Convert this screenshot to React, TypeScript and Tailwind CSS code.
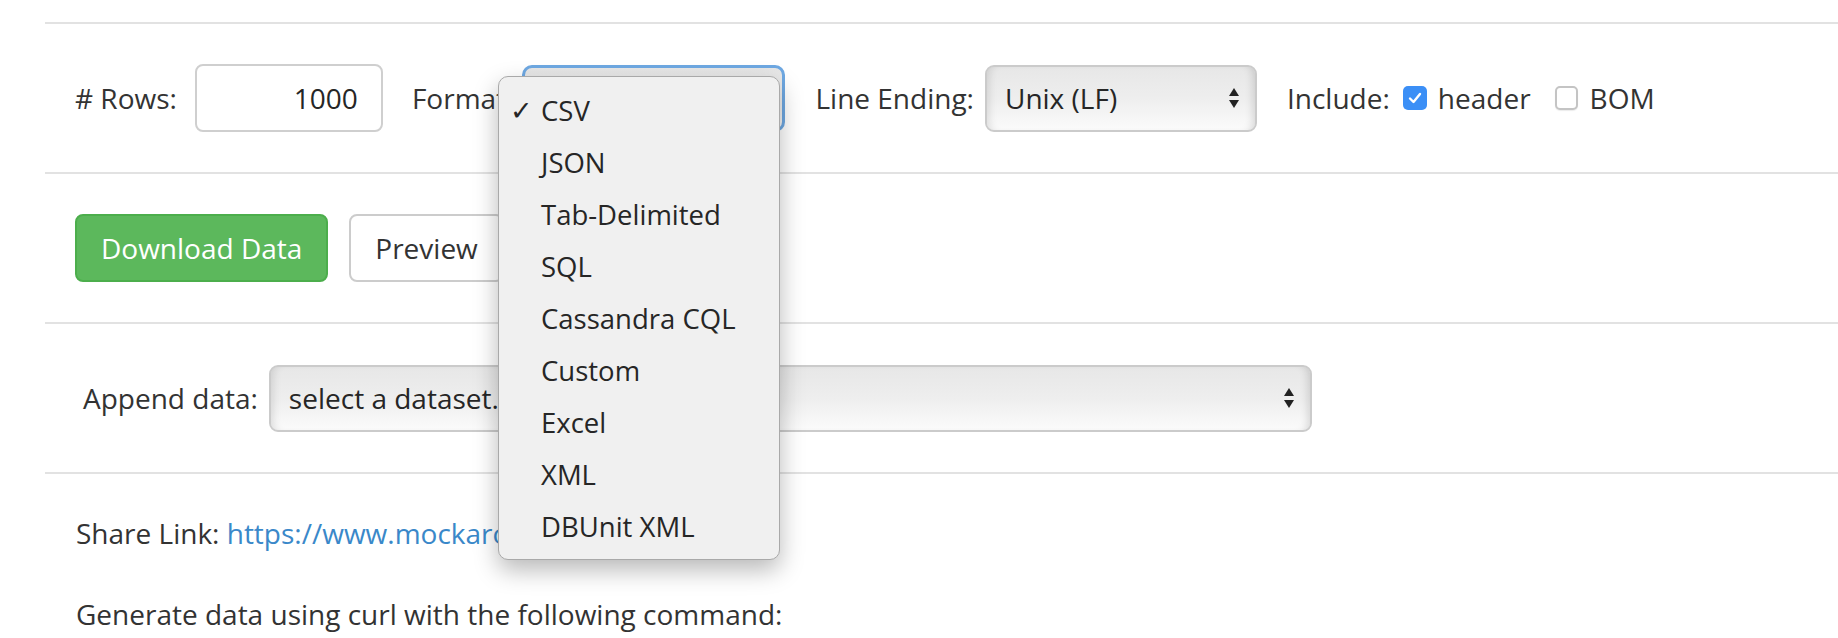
import React from "react";

// native-looking popup select (mac style)
const Arrows = () => (
  <svg width="12" height="22" viewBox="0 0 12 22" className="shrink-0">
    <path d="M6 1 L11 9 L1 9 Z" fill="#222" />
    <path d="M1 13 L11 13 L6 21 Z" fill="#222" />
  </svg>
);

const FakeSelect = ({ value, className }: { value: string; className: string }) => (
  <div
    className={`flex items-center justify-between h-[67px] pl-[18px] pr-[15px] rounded-[9px] border-2 border-[#cbcbcb] bg-gradient-to-b from-[#e7e7e7] via-[#eeeeee] to-[#fbfbfb] shadow-[inset_8px_0_8px_-6px_rgba(0,0,0,0.12),inset_-8px_0_8px_-6px_rgba(0,0,0,0.14)] ${className}`}
  >
    <span className="text-[#262626] whitespace-nowrap">{value}</span>
    <Arrows />
  </div>
);

const formats = [
  "CSV",
  "JSON",
  "Tab-Delimited",
  "SQL",
  "Cassandra CQL",
  "Custom",
  "Excel",
  "XML",
  "DBUnit XML",
];

export default function App() {
  return (
    <div className="relative min-h-screen overflow-hidden bg-white font-['Open_Sans',sans-serif] text-[28px] leading-[40px] text-[#333]">
      <div className="pt-[22px] pl-[45px]">
        {/* options row */}
        <div className="border-t-2 border-[#e2e2e2] py-[40px] pl-[30px]">
          <div className="flex items-center h-[68px] whitespace-nowrap">
            <span className="mr-[18px]"># Rows:</span>
            <div className="flex items-center justify-end w-[188px] h-[68px] pr-[23px] rounded-[8px] border-2 border-[#cfcfcf] bg-white text-[#262626]">
              1000
            </div>
            <span className="ml-[29px] mr-[9px]">Format:</span>
            <div className="w-[263px] h-[67px] rounded-[10px] border-[3px] border-[#6ea8e2] bg-gradient-to-b from-[#e6e6e6] to-[#f8f8f8]" />
            <span className="ml-[30px] mr-[11px]">Line Ending:</span>
            <FakeSelect value="Unix (LF)" className="w-[272px]" />
            <span className="ml-[30px] mr-[13px]">Include:</span>
            <div className="flex items-center justify-center w-[24px] h-[24px] rounded-[5px] bg-[#3b8ff6]">
              <svg width="14" height="12" viewBox="0 0 14 12">
                <path d="M2 6.5 L5.5 10 L12 2" fill="none" stroke="white" strokeWidth="2.4" strokeLinecap="round" strokeLinejoin="round" />
              </svg>
            </div>
            <span className="ml-[11px]">header</span>
            <div className="ml-[24px] w-[23px] h-[24px] rounded-[5px] border-2 border-[#c4c4c4] bg-white shadow-[0_1px_1px_rgba(0,0,0,0.08)]" />
            <span className="ml-[12px]">BOM</span>
          </div>
        </div>

        {/* buttons row */}
        <div className="border-t-2 border-[#e2e2e2] py-[40px] pl-[30px]">
          <div className="flex items-center h-[68px] gap-[21px]">
            <button className="h-[68px] px-[24px] rounded-[8px] border-2 border-[#4cae4c] bg-[#5cb85c] text-white">
              Download Data
            </button>
            <button className="h-[68px] px-[24px] rounded-[8px] border-2 border-[#cccccc] bg-white text-[#333]">
              Preview
            </button>
          </div>
        </div>

        {/* append row */}
        <div className="border-t-2 border-[#e2e2e2] py-[40px] pl-[38px]">
          <div className="flex items-center h-[68px]">
            <span className="mr-[11px] whitespace-nowrap">Append data:</span>
            <FakeSelect value="select a dataset..." className="w-[1043px]" />
          </div>
        </div>

        {/* share link */}
        <div className="border-t-2 border-[#e2e2e2] pt-[39px] pl-[31px]">
          <p className="whitespace-nowrap">
            Share Link: <a className="text-[#3a88c9]">https://www.mockaroo.com/5fd0b2a0</a>
          </p>
          <p className="mt-[41px] whitespace-nowrap">Generate data using curl with the following command:</p>
        </div>
      </div>

      {/* open format menu */}
      <div className="absolute left-[498px] top-[76px] w-[282px] pt-[8px] pb-[6px] rounded-[10px] border border-[#a9a9a9] bg-[#f0f0f0] shadow-[0_10px_24px_rgba(0,0,0,0.28)] text-[27.5px] leading-[52px] text-[#262626]">
        {formats.map((f, i) => (
          <div key={f} className="relative h-[52px] pl-[42px] whitespace-nowrap">
            {i === 0 && (
              <span className="absolute left-[11px] top-0 font-['DejaVu_Sans',sans-serif] text-[27px] font-bold">✓</span>
            )}
            {f}
          </div>
        ))}
      </div>
    </div>
  );
}
